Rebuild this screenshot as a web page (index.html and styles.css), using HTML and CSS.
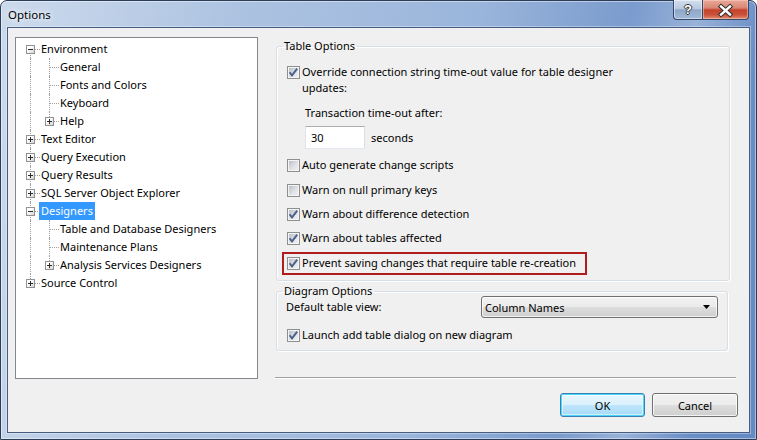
FILE: index.html
```html
<!DOCTYPE html>
<html>
<head>
<meta charset="utf-8">
<title>Options</title>
<link rel="stylesheet" href="styles.css">
</head>
<body>
<div class="window">
  <div class="titlebar">
    <span class="title">Options</span>
    <div class="caption-btns">
      <span class="cbtn help">?</span>
      <span class="cbtn close"><svg width="45" height="18" viewBox="0 0 45 18"><path d="M18 5.5 L27 13.5 M27 5.5 L18 13.5" stroke="#2e2e2e" stroke-width="4.4" stroke-linecap="square" fill="none"/><path d="M18 5.5 L27 13.5 M27 5.5 L18 13.5" stroke="#ffffff" stroke-width="2.4" stroke-linecap="square" fill="none"/></svg></span>
    </div>
  </div>
  <div class="client">
    <div class="tree">
      <div class="row"><span class="c f"><span class="exp minus"></span></span><span class="lbl">Environment</span></div>
      <div class="row"><span class="c v"></span><span class="c t"></span><span class="lbl">General</span></div>
      <div class="row"><span class="c v"></span><span class="c t"></span><span class="lbl">Fonts and Colors</span></div>
      <div class="row"><span class="c v"></span><span class="c t"></span><span class="lbl">Keyboard</span></div>
      <div class="row"><span class="c v"></span><span class="c l"><span class="exp plus"></span></span><span class="lbl">Help</span></div>
      <div class="row"><span class="c t"><span class="exp plus"></span></span><span class="lbl">Text Editor</span></div>
      <div class="row"><span class="c t"><span class="exp plus"></span></span><span class="lbl">Query Execution</span></div>
      <div class="row"><span class="c t"><span class="exp plus"></span></span><span class="lbl">Query Results</span></div>
      <div class="row"><span class="c t"><span class="exp plus"></span></span><span class="lbl">SQL Server Object Explorer</span></div>
      <div class="row"><span class="c t"><span class="exp minus"></span></span><span class="lbl selected">Designers</span></div>
      <div class="row"><span class="c v"></span><span class="c t"></span><span class="lbl">Table and Database Designers</span></div>
      <div class="row"><span class="c v"></span><span class="c t"></span><span class="lbl">Maintenance Plans</span></div>
      <div class="row"><span class="c v"></span><span class="c l"><span class="exp plus"></span></span><span class="lbl">Analysis Services Designers</span></div>
      <div class="row"><span class="c l"><span class="exp plus"></span></span><span class="lbl">Source Control</span></div>
    </div>
    <div class="pane">
      <fieldset class="group g1">
        <legend>Table Options</legend>
        <div class="check first"><span class="cb on"><svg width="11" height="11" viewBox="0 0 11 11"><path d="M1.6 5.2 L4 8.4 L9.2 1.6" stroke="#4a5f8e" stroke-width="1.9" fill="none"/></svg></span><span class="ctext">Override connection string time-out value for table designer<br>updates:</span></div>
        <div class="timeout">
          <div class="tlabel">Transaction time-out after:</div>
          <div class="trow"><span class="textbox">30</span><span>seconds</span></div>
        </div>
        <div class="check m8"><span class="cb"></span><span class="ctext">Auto generate change scripts</span></div>
        <div class="check m9"><span class="cb"></span><span class="ctext">Warn on null primary keys</span></div>
        <div class="check m8"><span class="cb on"><svg width="11" height="11" viewBox="0 0 11 11"><path d="M1.6 5.2 L4 8.4 L9.2 1.6" stroke="#4a5f8e" stroke-width="1.9" fill="none"/></svg></span><span class="ctext">Warn about difference detection</span></div>
        <div class="check m8"><span class="cb on"><svg width="11" height="11" viewBox="0 0 11 11"><path d="M1.6 5.2 L4 8.4 L9.2 1.6" stroke="#4a5f8e" stroke-width="1.9" fill="none"/></svg></span><span class="ctext">Warn about tables affected</span></div>
        <div class="highlight">
          <div class="check"><span class="cb on"><svg width="11" height="11" viewBox="0 0 11 11"><path d="M1.6 5.2 L4 8.4 L9.2 1.6" stroke="#4a5f8e" stroke-width="1.9" fill="none"/></svg></span><span class="ctext">Prevent saving changes that require table re-creation</span></div>
        </div>
      </fieldset>
      <fieldset class="group g2">
        <legend>Diagram Options</legend>
        <div class="viewrow">
          <span class="vlabel">Default table view:</span>
          <span class="combo"><span>Column Names</span><svg width="7" height="4" viewBox="0 0 7 4"><path d="M0 0 H7 L3.5 4 Z" fill="#000"/></svg></span>
        </div>
        <div class="check m9"><span class="cb on"><svg width="11" height="11" viewBox="0 0 11 11"><path d="M1.6 5.2 L4 8.4 L9.2 1.6" stroke="#4a5f8e" stroke-width="1.9" fill="none"/></svg></span><span class="ctext">Launch add table dialog on new diagram</span></div>
      </fieldset>
      <div class="sep"></div>
      <div class="buttons">
        <span class="btn default">OK</span>
        <span class="btn">Cancel</span>
      </div>
    </div>
  </div>
</div>
</body>
</html>
```

FILE: styles.css
```css
* { box-sizing: border-box; }
html, body { margin: 0; padding: 0; background: #ffffff; }
body {
  font-family: "Noto Sans", "Open Sans", "DejaVu Sans", sans-serif;
  font-size: 11px;
  color: #000;
}

.window {
  width: 757px;
  height: 440px;
  border: 1px solid #2c3d58;
  border-radius: 7px 7px 0 0;
  display: flex;
  flex-direction: column;
  background:
    linear-gradient(100deg, rgba(255,255,255,0.3) 0%, rgba(255,255,255,0) 30%),
    linear-gradient(100deg, #b6cae4 0%, #a9c0e0 35%, #9ab5db 58%, #7a9bcd 76%, #98b2d8 84%, #6a8ec6 92%, #6589c2 100%);
  box-shadow: inset 0 0 0 1px rgba(255,255,255,0.45);
}

/* title bar */
.titlebar {
  height: 26px;
  flex: none;
  display: flex;
  justify-content: space-between;
  align-items: flex-start;
  padding-left: 7px;
}
.title {
  font-size: 11.5px;
  line-height: 27px;
  color: #000;
  text-shadow: 0 0 8px rgba(255,255,255,0.95), 0 0 4px rgba(255,255,255,0.9);
}
.caption-btns {
  display: flex;
  margin-top: -1px;
  margin-right: 7px;
}
.cbtn {
  height: 20px;
  display: flex;
  align-items: center;
  justify-content: center;
  border: 1px solid #34486a;
  border-top: none;
}
.cbtn.help {
  width: 29px;
  border-right: none;
  border-radius: 0 0 0 4px;
  background: linear-gradient(#d3deec 0%, #b9cae0 45%, #8ea7c8 52%, #a2b9d7 100%);
  box-shadow: inset 0 0 0 1px rgba(255,255,255,0.45);
  color: #fff;
  font-family: "Liberation Sans", "DejaVu Sans", sans-serif;
  font-weight: bold;
  font-size: 13px;
  text-shadow: 1px 0 #3a3a3a, -1px 0 #3a3a3a, 0 1px #3a3a3a, 0 -1px #3a3a3a;
}
.cbtn.close {
  width: 47px;
  border-radius: 0 0 4px 0;
  background: linear-gradient(#eaa99a 0%, #d98673 42%, #c5432c 52%, #c9513a 78%, #e48d70 100%);
  box-shadow: inset 0 0 0 1px rgba(255,220,210,0.45);
}
.cbtn.close svg { display: block; }

/* client */
.client {
  flex: 1;
  margin: 0 6px 6px 6px;
  border: 1px solid #465c80;
  background: #f0f0f0;
  display: flex;
  align-items: flex-start;
  padding: 9px 11px 0 7px;
  box-shadow: 0 0 0 1px rgba(255,255,255,0.35);
}

/* tree */
.tree {
  width: 243px;
  height: 342px;
  flex: none;
  border: 1px solid #828790;
  background: #fff;
  padding: 2px 0 0 5px;
}
.row {
  display: flex;
  height: 18px;
  align-items: center;
}
.c {
  width: 19px;
  height: 18px;
  flex: none;
  position: relative;
  display: flex;
  align-items: center;
}
.c::before, .c::after { content: ""; position: absolute; }
.c.v::before, .c.t::before {
  left: 9px; top: 0; bottom: 0;
  border-left: 1px dotted #a0a0a0;
}
.c.l::before {
  left: 9px; top: 0; height: 9px;
  border-left: 1px dotted #a0a0a0;
}
.c.f::before {
  left: 9px; top: 9px; bottom: 0;
  border-left: 1px dotted #a0a0a0;
}
.c.t::after, .c.l::after, .c.f::after {
  left: 10px; right: 0; top: 9px;
  border-top: 1px dotted #a0a0a0;
}
.exp {
  position: relative;
  z-index: 1;
  margin-left: 5px;
  width: 9px;
  height: 9px;
  border: 1px solid #919191;
  background: linear-gradient(135deg, #ffffff 35%, #d2d2d2 100%);
}
.exp.minus {
  background:
    linear-gradient(#2b2b2b, #2b2b2b) 1px 3px / 5px 1px no-repeat,
    linear-gradient(135deg, #ffffff 35%, #d2d2d2 100%);
}
.exp.plus {
  background:
    linear-gradient(#2b2b2b, #2b2b2b) 1px 3px / 5px 1px no-repeat,
    linear-gradient(#2b2b2b, #2b2b2b) 3px 1px / 1px 5px no-repeat,
    linear-gradient(135deg, #ffffff 35%, #d2d2d2 100%);
}
.lbl {
  margin-left: -1px;
  padding: 0 2px;
  line-height: 18px;
  white-space: nowrap;
}
.lbl.selected {
  background: #3399ff;
  color: #fff;
}

/* right pane */
.pane {
  flex: 1;
  margin-left: 17px;
  display: flex;
  flex-direction: column;
}
.group {
  margin: 0;
  min-width: 0;
  border: 1px solid #d5dfe5;
  border-radius: 3px;
  box-shadow: 1px 1px 0 #ffffff, inset 1px 1px 0 #ffffff;
}
.group legend {
  padding: 0 2px;
  margin-left: -5px;
  line-height: 14px;
}
.g1 {
  margin: 2px 0 0 1px;
  width: 454px;
  padding: 0 8px 5px 10px;
}
.g2 {
  margin: 3px 0 0 1px;
  width: 452px;
  padding: 0 8px 7px 10px;
}

.check {
  display: flex;
  align-items: flex-start;
  line-height: 16px;
}
.check.first { margin-top: 11px; }
.check.m8 { margin-top: 8px; }
.check.m9 { margin-top: 9px; }
.cb {
  width: 13px;
  height: 13px;
  flex: none;
  margin-top: 2px;
  margin-right: 2px;
  border: 1px solid #8e8f8f;
  background: linear-gradient(135deg, #b4b9c0 0%, #dfe1e4 55%, #f4f4f4 100%);
  box-shadow: inset 0 0 0 1px #f4f4f4;
}
.cb svg { display: block; }
.ctext { white-space: nowrap; }

.timeout { padding-left: 18px; }
.tlabel { margin-top: 9px; line-height: 16px; }
.trow {
  margin-top: 5px;
  display: flex;
  align-items: center;
  gap: 6px;
}
.textbox {
  width: 60px;
  height: 23px;
  border: 1px solid;
  border-color: #abadb3 #dbdfe6 #e3e9ef #e2e3ea;
  background: #fff;
  padding-left: 5px;
  line-height: 21px;
}

.highlight {
  width: fit-content;
  margin: 6px 0 0 -5px;
  border: 2px solid #b01d1d;
  padding: 1px 9px 2px 3px;
}

.viewrow {
  display: flex;
  align-items: center;
  height: 22px;
  margin: -2px 0 0 -1px;
}
.vlabel { flex: 0 0 195px; line-height: 16px; }
.combo {
  width: 237px;
  height: 22px;
  display: flex;
  align-items: center;
  justify-content: space-between;
  padding: 0 7px 0 3px;
  border: 1px solid #707070;
  border-radius: 3px;
  background: linear-gradient(#f2f2f2 0%, #ebebeb 50%, #dddddd 51%, #cfcfcf 100%);
  box-shadow: inset 0 0 0 1px rgba(255,255,255,0.7);
}
.combo svg { display: block; }

.sep {
  height: 2px;
  margin: 26px 2px 0 0;
  border-top: 1px solid #a0a0a0;
  border-bottom: 1px solid #ffffff;
}
.buttons {
  margin-top: 14px;
  display: flex;
  justify-content: flex-end;
  gap: 7px;
}
.btn {
  width: 86px;
  height: 24px;
  display: flex;
  align-items: center;
  justify-content: center;
  border: 1px solid #707070;
  border-radius: 3px;
  background: linear-gradient(#f2f2f2 0%, #ebebeb 50%, #dddddd 51%, #cfcfcf 100%);
  box-shadow: inset 0 0 0 1px rgba(255,255,255,0.75);
}
.btn.default {
  width: 85px;
  border-color: #3c7fb1;
  background: linear-gradient(#eaf6fd 0%, #d9f0fc 50%, #bee6fd 51%, #a7d9f5 100%);
  box-shadow: inset 0 0 0 1px #48d8fb, inset 0 0 0 2px rgba(255,255,255,0.5);
}
```
